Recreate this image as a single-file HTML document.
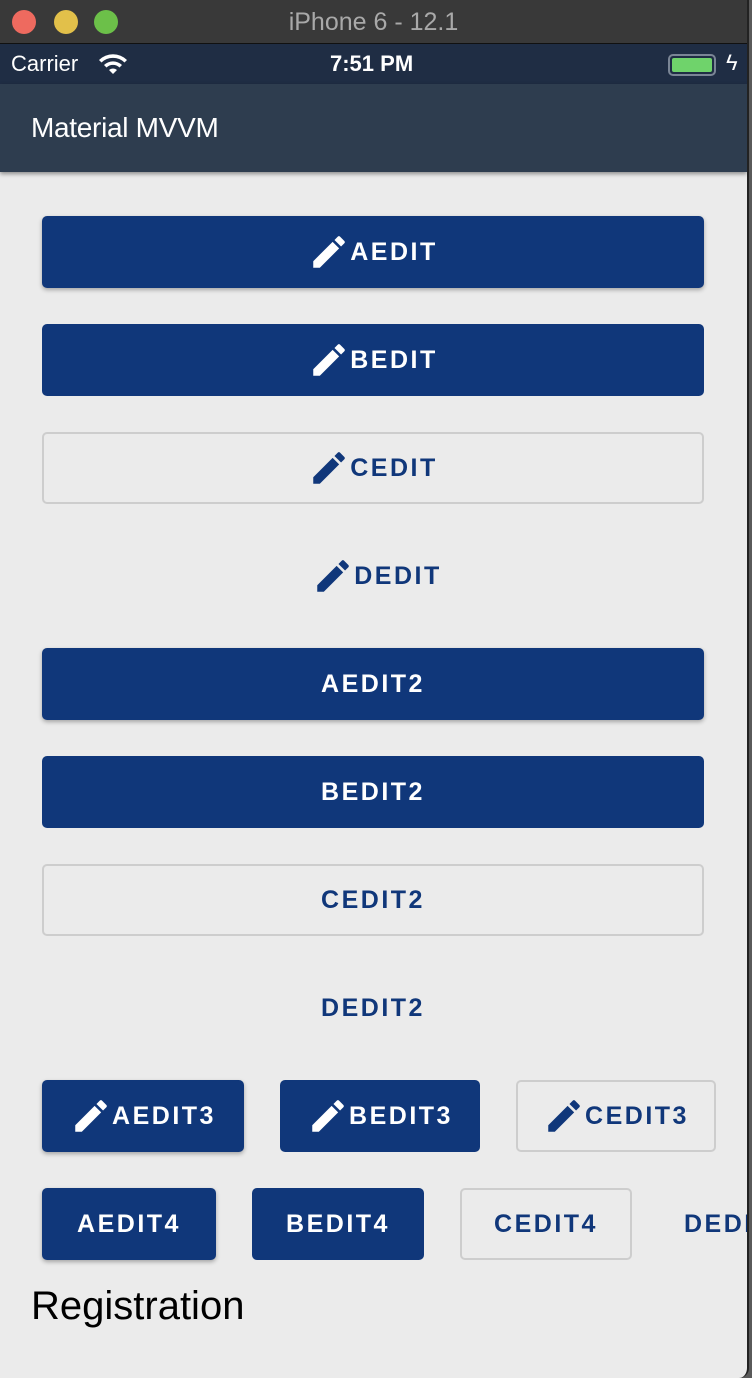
<!DOCTYPE html>
<html><head><meta charset="utf-8"><style>
*{margin:0;padding:0;box-sizing:border-box}
body{width:752px;height:1378px;background:#5a5a5a;position:relative;overflow:hidden;font-family:"Liberation Sans",sans-serif}
#win{position:absolute;left:0;top:0;width:749px;height:1378px;background:#ebebeb;border-radius:0 0 10px 0;overflow:hidden;border-right:2px solid #222}
#title{position:absolute;left:0;top:0;width:100%;height:44px;background:#393939;border-bottom:1px solid #111;color:#a9a9a9;font-size:25px;text-align:center;line-height:44px}
.dot{position:absolute;top:10px;width:24px;height:24px;border-radius:50%}
#status{position:absolute;top:44px;left:0;width:100%;height:40px;background:#1f2d44;color:#fff}
#app{position:absolute;top:84px;left:0;width:100%;height:88px;background:#2e3d4f;color:#fff;font-size:28px;box-shadow:0 2px 4px rgba(0,0,0,.4)}
.b{position:absolute;height:72px;border-radius:5px;display:flex;align-items:center;justify-content:center;font-weight:bold;font-size:25px;letter-spacing:2.5px;color:#10377a}
.f{background:#10377a;color:#fff}
.s{box-shadow:0 2px 4px rgba(0,0,0,.3)}
.o{border:2px solid #cdcdcd}
svg{width:42px;height:42px;margin-right:0;fill:currentColor}
</style></head><body>
<div id="win">
<div id="title"><div class="dot" style="left:12px;background:#ee6a5f"></div><div class="dot" style="left:54px;background:#e2c04a"></div><div class="dot" style="left:94px;background:#6cc049"></div>iPhone 6 - 12.1</div>
<div id="status"><span style="position:absolute;left:11px;top:7px;font-size:22px">Carrier</span>
<svg style="position:absolute;left:98px;top:8px;width:30px;height:24px" viewBox="0 0 30 24"><path d="M15 22l-4-4a6 6 0 018 0zM6 13a13 13 0 0118 0l-2.5 2.5a9.5 9.5 0 00-13 0zM1 8a20 20 0 0128 0l-2.5 2.5a16.5 16.5 0 00-23 0z" fill="#fff"/></svg>
<span style="position:absolute;left:330px;top:7px;font-size:22px;font-weight:bold">7:51 PM</span>
<div style="position:absolute;left:668px;top:10px;width:48px;height:22px;border:2px solid #7a8595;border-radius:5px;padding:2px"><div style="background:#6fd36b;width:100%;height:100%;border-radius:2px"></div></div>
<span style="position:absolute;left:726px;top:6px;font-size:22px">ϟ</span></div>
<div id="app"><span style="position:absolute;left:31px;top:28px;letter-spacing:-0.3px">Material MVVM</span></div>
<svg style="display:none"><symbol id="p" viewBox="0 0 24 24"><path d="M3 17.25V21h3.75L17.81 9.94l-3.75-3.75L3 17.25zM20.71 7.04a1 1 0 000-1.41l-2.34-2.34a1 1 0 00-1.41 0l-1.83 1.83 3.75 3.75 1.83-1.83z"/></symbol></svg>
<div class="b f s" style="left:42px;top:216px;width:662px"><svg><use href="#p"/></svg>AEDIT</div>
<div class="b f" style="left:42px;top:324px;width:662px"><svg><use href="#p"/></svg>BEDIT</div>
<div class="b o" style="left:42px;top:432px;width:662px"><svg><use href="#p"/></svg>CEDIT</div>
<div class="b" style="left:42px;top:540px;width:662px;padding-left:8px"><svg><use href="#p"/></svg>DEDIT</div>
<div class="b f s" style="left:42px;top:648px;width:662px">AEDIT2</div>
<div class="b f" style="left:42px;top:756px;width:662px">BEDIT2</div>
<div class="b o" style="left:42px;top:864px;width:662px">CEDIT2</div>
<div class="b" style="left:42px;top:972px;width:662px">DEDIT2</div>
<div class="b f s" style="left:42px;top:1080px;width:202px"><svg><use href="#p"/></svg>AEDIT3</div>
<div class="b f" style="left:280px;top:1080px;width:200px"><svg><use href="#p"/></svg>BEDIT3</div>
<div class="b o" style="left:516px;top:1080px;width:200px"><svg><use href="#p"/></svg>CEDIT3</div>
<div class="b f s" style="left:42px;top:1188px;width:174px">AEDIT4</div>
<div class="b f" style="left:252px;top:1188px;width:172px">BEDIT4</div>
<div class="b o" style="left:460px;top:1188px;width:172px">CEDIT4</div>
<div class="b" style="left:684px;top:1188px;width:172px;justify-content:flex-start">DEDIT4</div>
<div style="position:absolute;left:31px;top:1284px;font-size:40px;color:#000">Registration</div>
</div>
</body></html>
